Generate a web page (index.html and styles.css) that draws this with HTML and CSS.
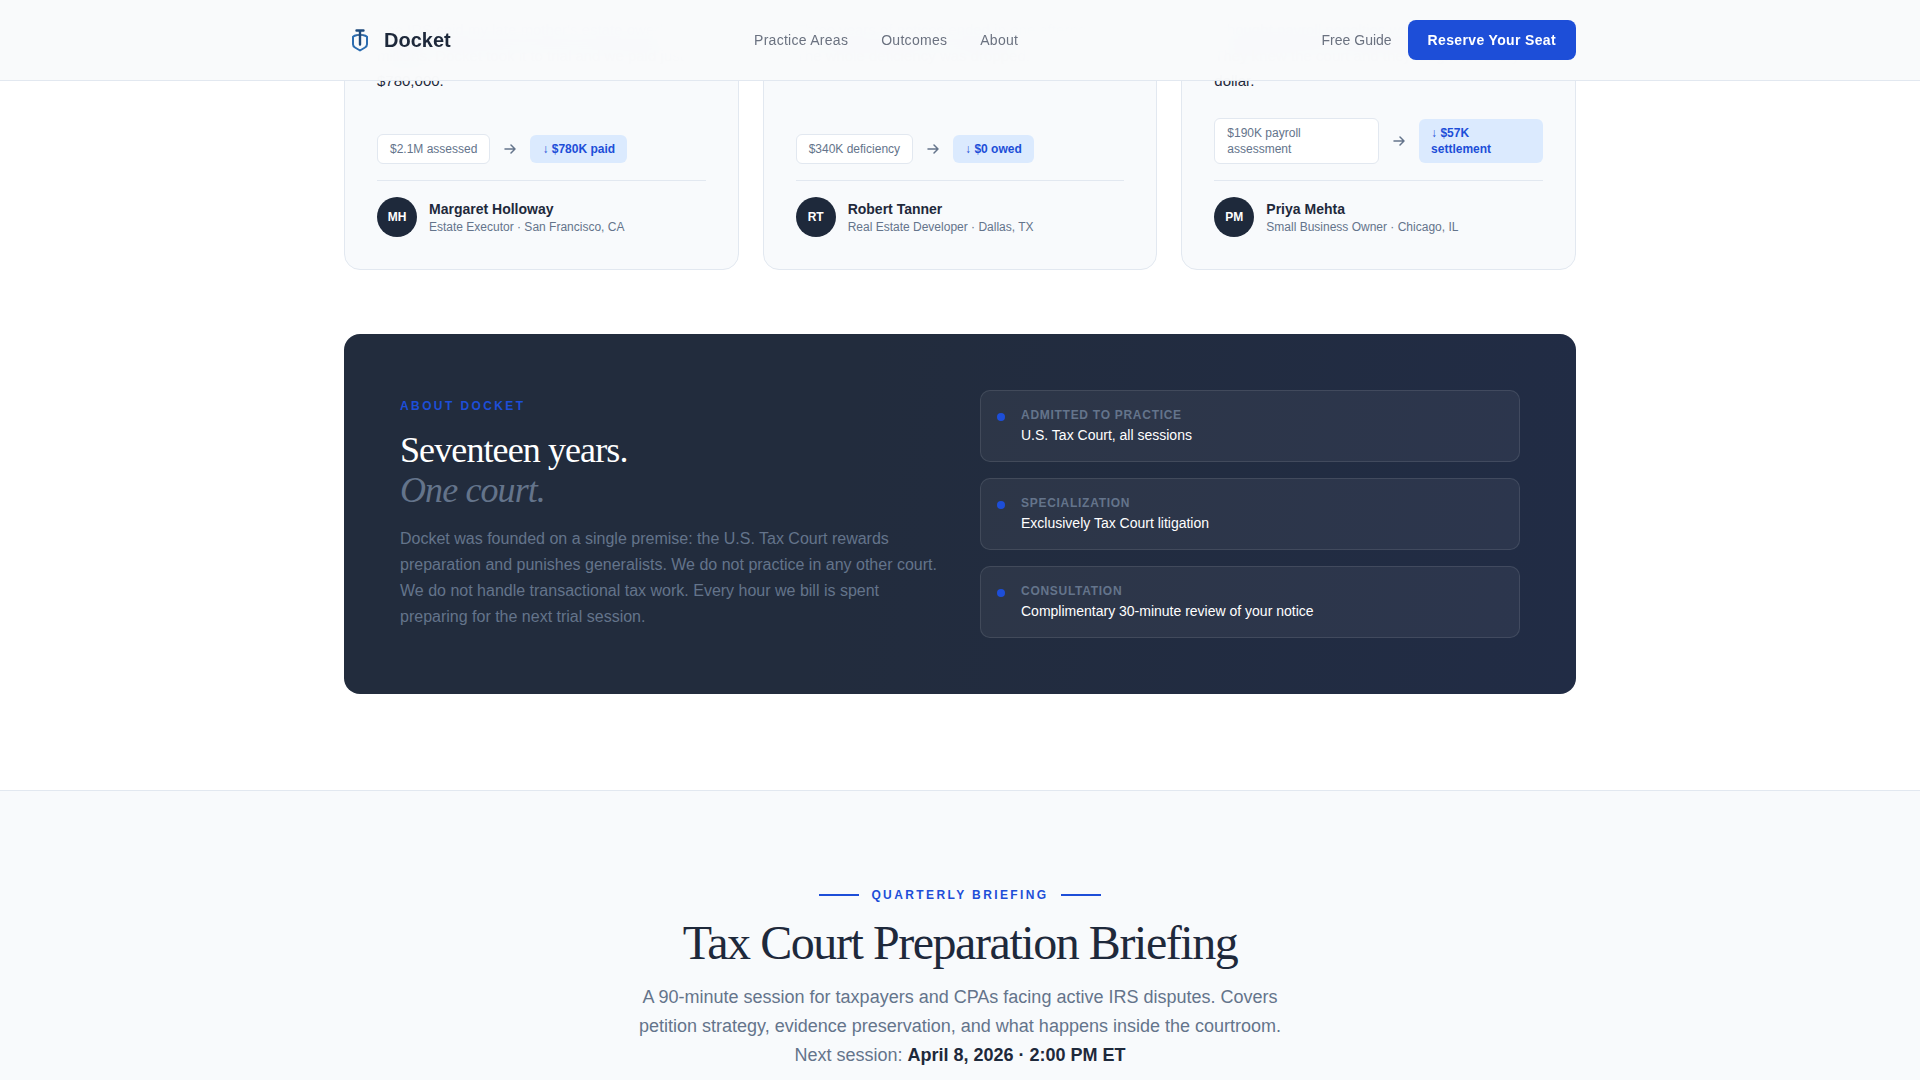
FILE: index.html
```html
<!DOCTYPE html>
<html lang="en">
<head>
  <meta charset="UTF-8" />
  <meta name="viewport" content="width=device-width, initial-scale=1.0"/>
  <title>Docket</title>
  <link rel="stylesheet" href="styles.css">
</head>
<body>
  <nav class="nav">
    <div class="nav-inner">
      <a class="brand" href="#">
        <svg class="brand-icon" viewBox="0 0 28 28" fill="none" stroke-linecap="round" stroke-linejoin="round">
          <path d="M12.500 9.300C11.200 9.500 10 10 9 10.800v7.400c0 1.500.7 2.500 2 3.300l5 3 5-3c1.300-.8 2-1.800 2-3.300v-7.400c-1-.8-2.200-1.300-3.500-1.500" stroke="#2b6cb0" stroke-width="2"/>
          <path d="M12.500 4.500h7M16 4.500v14" stroke="#1e4a7c" stroke-width="2.400"/>
          <path d="M13.500 9h5" stroke="#1e4a7c" stroke-width="1.600"/>
        </svg>
        <span>Docket</span>
      </a>
      <div class="nav-links">
        <a href="#">Practice Areas</a>
        <a href="#">Outcomes</a>
        <a href="#">About</a>
      </div>
      <div class="nav-actions">
        <a href="#">Free Guide</a>
        <a class="nav-button" href="#">Reserve Your Seat</a>
      </div>
    </div>
  </nav>

  <!-- page is photographed part way down, so the cards start above the fold -->
  <main class="page">
    <section class="cards">
      <article class="card">
        <p class="quote">The IRS said my late mother's estate owed millions. Docket took it to trial and we paid just $780,000.</p>
        <div class="result">
          <span class="pill">$2.1M assessed</span>
          <svg class="arrow" viewBox="0 0 16 16" fill="none" stroke="#64748b" stroke-width="1.500" stroke-linecap="round" stroke-linejoin="round"><path d="M3 8h10M9 4l4 4-4 4"/></svg>
          <span class="pill pill-win">↓ $780K paid</span>
        </div>
        <div class="person">
          <div class="initials">MH</div>
          <div class="person-info">
            <div class="person-name">Margaret Holloway</div>
            <div class="person-role">Estate Executor · San Francisco, CA</div>
          </div>
        </div>
      </article>

      <article class="card">
        <p class="quote">Three years of notices ended in one afternoon. The whole deficiency was dropped.</p>
        <div class="result">
          <span class="pill">$340K deficiency</span>
          <svg class="arrow" viewBox="0 0 16 16" fill="none" stroke="#64748b" stroke-width="1.500" stroke-linecap="round" stroke-linejoin="round"><path d="M3 8h10M9 4l4 4-4 4"/></svg>
          <span class="pill pill-win">↓ $0 owed</span>
        </div>
        <div class="person">
          <div class="initials">RT</div>
          <div class="person-info">
            <div class="person-name">Robert Tanner</div>
            <div class="person-role">Real Estate Developer · Dallas, TX</div>
          </div>
        </div>
      </article>

      <article class="card">
        <p class="quote">I thought payroll penalties would close the shop. They knew the court and they fought for every dollar.</p>
        <div class="result">
          <span class="pill">$190K payroll assessment</span>
          <svg class="arrow" viewBox="0 0 16 16" fill="none" stroke="#64748b" stroke-width="1.500" stroke-linecap="round" stroke-linejoin="round"><path d="M3 8h10M9 4l4 4-4 4"/></svg>
          <span class="pill pill-win">↓ $57K settlement</span>
        </div>
        <div class="person">
          <div class="initials">PM</div>
          <div class="person-info">
            <div class="person-name">Priya Mehta</div>
            <div class="person-role">Small Business Owner · Chicago, IL</div>
          </div>
        </div>
      </article>
    </section>

    <section class="about">
      <div class="about-text">
        <div class="about-label">ABOUT DOCKET</div>
        <h2 class="about-title">Seventeen years.<br><em>One court.</em></h2>
        <p class="about-copy">Docket was founded on a single premise: the U.S. Tax Court rewards preparation and punishes generalists. We do not practice in any other court. We do not handle transactional tax work. Every hour we bill is spent preparing for the next trial session.</p>
      </div>
      <div class="facts">
        <div class="fact">
          <span class="fact-dot"></span>
          <div>
            <div class="fact-label">Admitted to practice</div>
            <div class="fact-value">U.S. Tax Court, all sessions</div>
          </div>
        </div>
        <div class="fact">
          <span class="fact-dot"></span>
          <div>
            <div class="fact-label">Specialization</div>
            <div class="fact-value">Exclusively Tax Court litigation</div>
          </div>
        </div>
        <div class="fact">
          <span class="fact-dot"></span>
          <div>
            <div class="fact-label">Consultation</div>
            <div class="fact-value">Complimentary 30-minute review of your notice</div>
          </div>
        </div>
      </div>
    </section>
  </main>

  <section class="briefing">
    <div class="briefing-label">QUARTERLY BRIEFING</div>
    <h2 class="briefing-title">Tax Court Preparation Briefing</h2>
    <p class="briefing-copy">A 90-minute session for taxpayers and CPAs facing active IRS disputes. Covers petition strategy, evidence preservation, and what happens inside the courtroom. <br>Next session: <strong>April 8, 2026 · 2:00 PM ET</strong></p>
  </section>
</body>
</html>
```

FILE: styles.css
```css
html {
  overflow: hidden;
}
body {
  margin: 0;
  height: 1080px;
  overflow: hidden;
  font-family: "Liberation Sans", Arial, sans-serif;
  background: #fff;
  color: #1e293b;
}
a {
  color: inherit;
  text-decoration: none;
}
.nav {
  position: fixed;
  top: 0;
  left: 0;
  right: 0;
  z-index: 10;
  height: 81px;
  box-sizing: border-box;
  background: rgba(249, 250, 251, 0.97);
  backdrop-filter: blur(16px);
  border-bottom: 1px solid #e2e8f0;
}
.nav-inner {
  width: 1232px;
  height: 80px;
  margin: 0 auto;
  display: flex;
  align-items: center;
  justify-content: space-between;
}
.brand {
  display: flex;
  align-items: center;
  gap: 12px;
  font-size: 20px;
  font-weight: 700;
  color: #1e293b;
}
.brand-icon {
  width: 28px;
  height: 28px;
}
.nav-links {
  display: flex;
  gap: 33px;
  font-size: 14px;
  letter-spacing: 0.02em;
  color: #6b7280;
}
.nav-actions {
  display: flex;
  align-items: center;
  gap: 16px;
  font-size: 14px;
  color: #6b7280;
}
.nav-button {
  height: 40px;
  padding: 0 20px;
  display: flex;
  align-items: center;
  background: #1d4ed8;
  border-radius: 8px;
  color: #fff;
  font-weight: 700;
  letter-spacing: 0.025em;
}
.page {
  width: 1232px;
  margin: -16px auto 0;
}
.cards {
  display: grid;
  grid-template-columns: repeat(3, 1fr);
  gap: 24px;
}
.card {
  display: flex;
  flex-direction: column;
  padding: 32px;
  background: #f8fafc;
  border: 1px solid #e2e8f0;
  border-radius: 16px;
}
.quote {
  flex: 1;
  margin: 0 0 24px;
  font-size: 15px;
  line-height: 1.7;
  color: #1e293b;
}
.result {
  display: flex;
  align-items: center;
  gap: 12px;
  margin-bottom: 16px;
}
.pill {
  padding: 6px 12px;
  font-size: 12px;
  line-height: 16px;
  color: #64748b;
  background: #fff;
  border: 1px solid #e2e8f0;
  border-radius: 6px;
}
.pill-win {
  color: #1d4ed8;
  font-weight: 700;
  background: #dbeafe;
  border: none;
}
.arrow {
  width: 16px;
  height: 16px;
  flex-shrink: 0;
}
.person {
  display: flex;
  align-items: center;
  gap: 12px;
  padding-top: 16px;
  border-top: 1px solid #e2e8f0;
}
.initials {
  width: 40px;
  height: 40px;
  display: flex;
  align-items: center;
  justify-content: center;
  border-radius: 50%;
  background: #1e293b;
  color: #fff;
  font-size: 12px;
  font-weight: 700;
}
.person-info {
  padding-top: 2px;
}
.person-name {
  font-size: 14px;
  font-weight: 700;
  line-height: 18px;
}
.person-role {
  margin-top: 1px;
  font-size: 12px;
  line-height: 16px;
  color: #64748b;
}
.about {
  margin-top: 64px;
  padding: 56px;
  display: grid;
  grid-template-columns: 1fr 1fr;
  gap: 40px;
  align-items: center;
  background: linear-gradient(100deg, #222c3d 40%, #212c45 100%);
  border-radius: 16px;
}
.about-label {
  padding-top: 1px;
  margin-bottom: 17px;
  font-size: 12px;
  font-weight: 700;
  letter-spacing: 0.2em;
  color: #1d4ed8;
}
.about-title {
  margin: 0 0 16px;
  font-family: "Liberation Serif", "Times New Roman", serif;
  font-size: 36px;
  font-weight: 400;
  line-height: 40px;
  letter-spacing: -0.025em;
  color: #fff;
}
.about-title em {
  color: #64748b;
}
.about-copy {
  margin: 0;
  font-size: 16px;
  line-height: 26px;
  color: #64748b;
}
.facts {
  display: flex;
  flex-direction: column;
  gap: 16px;
}
.fact {
  display: flex;
  align-items: flex-start;
  gap: 16px;
  padding: 16px;
  background: rgba(255, 255, 255, 0.05);
  border: 1px solid rgba(255, 255, 255, 0.1);
  border-radius: 10px;
}
.fact-dot {
  width: 8px;
  height: 8px;
  margin-top: 6px;
  flex-shrink: 0;
  border-radius: 50%;
  background: #1d4ed8;
}
.fact-label {
  margin-bottom: 2px;
  font-size: 12px;
  font-weight: 700;
  line-height: 16px;
  letter-spacing: 0.06em;
  text-transform: uppercase;
  color: #64748b;
}
.fact-value {
  font-size: 14px;
  line-height: 20px;
  color: #fff;
}
.briefing {
  margin-top: 96px;
  padding: 96px 0;
  text-align: center;
  background: #f8fafc;
  border-top: 1px solid #e2e8f0;
}
.briefing-label {
  display: flex;
  align-items: center;
  justify-content: center;
  gap: 12px;
  font-size: 12px;
  font-weight: 700;
  line-height: 16px;
  letter-spacing: 0.2em;
  color: #1d4ed8;
}
.briefing-label::before,
.briefing-label::after {
  content: "";
  width: 40px;
  height: 2px;
  background: #1d4ed8;
}
.briefing-title {
  margin: 12px 0 12px;
  font-family: "Liberation Serif", "Times New Roman", serif;
  font-size: 48px;
  font-weight: 400;
  line-height: 56px;
  letter-spacing: -0.03em;
  color: #1e293b;
}
.briefing-copy {
  width: 680px;
  margin: 0 auto;
  font-size: 18px;
  line-height: 29.4px;
  color: #64748b;
}
.briefing-copy strong {
  color: #1e293b;
}
```
